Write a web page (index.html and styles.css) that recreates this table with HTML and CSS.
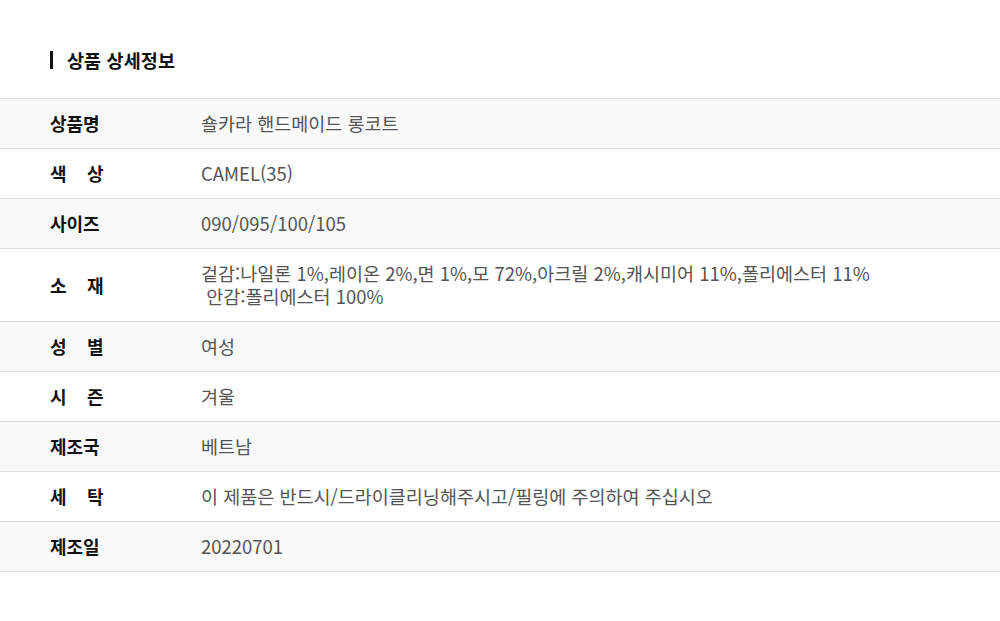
FILE: index.html
```html
<!DOCTYPE html>
<html lang="ko">
<head>
<meta charset="utf-8">
<title>상품 상세정보</title>
<link rel="stylesheet" href="styles.css">
</head>
<body>
<div class="page">
  <h2 class="title">상품 상세정보</h2>
  <table class="spec">
    <tbody>
      <tr class="alt"><th>상품명</th><td>숄카라 핸드메이드 롱코트</td></tr>
      <tr><th><span class="sp">색</span>상</th><td>CAMEL(35)</td></tr>
      <tr class="alt"><th>사이즈</th><td>090/095/100/105</td></tr>
      <tr><th><span class="sp">소</span>재</th><td>겉감:나일론 1%,레이온 2%,면 1%,모 72%,아크릴 2%,캐시미어 11%,폴리에스터 11%<br>&nbsp;안감:폴리에스터 100%</td></tr>
      <tr class="alt"><th><span class="sp">성</span>별</th><td>여성</td></tr>
      <tr><th><span class="sp">시</span>즌</th><td>겨울</td></tr>
      <tr class="alt"><th>제조국</th><td>베트남</td></tr>
      <tr><th><span class="sp">세</span>탁</th><td>이 제품은 반드시/드라이클리닝해주시고/필링에 주의하여 주십시오</td></tr>
      <tr class="alt"><th>제조일</th><td>20220701</td></tr>
    </tbody>
  </table>
</div>
</body>
</html>
```
FILE: styles.css
```css
html, body {
  margin: 0;
  padding: 0;
  background: #fff;
}
body {
  font-family: "Noto Sans CJK KR", "Noto Sans", sans-serif;
  color: #222;
}
.page {
  padding-top: 51px;
}
.title {
  margin: 0 0 29px 50px;
  padding-left: 14px;
  border-left: 3px solid #111;
  font-size: 18.5px;
  font-weight: 700;
  line-height: 18px;
  height: 18px;
  letter-spacing: 0.1px;
  color: #111;
  display: flex;
  align-items: center;
}
.spec {
  width: 100%;
  border-collapse: collapse;
  border-top: 1px solid #ddd;
}
.spec tr {
  border-bottom: 1px solid #ddd;
}
.spec tr.alt {
  background: #f9f9f9;
}
.spec th {
  width: 151px;
  padding: 13px 0 13px 50px;
  text-align: left;
  vertical-align: middle;
  font-size: 18px;
  font-weight: 700;
  line-height: 23px;
  letter-spacing: 0;
  color: #111;
}
.spec td {
  padding: 13px 0;
  font-size: 18.5px;
  font-weight: 400;
  line-height: 23px;
  letter-spacing: 0;
  color: #555;
}
.sp {
  display: inline-block;
  width: 37px;
}
```
